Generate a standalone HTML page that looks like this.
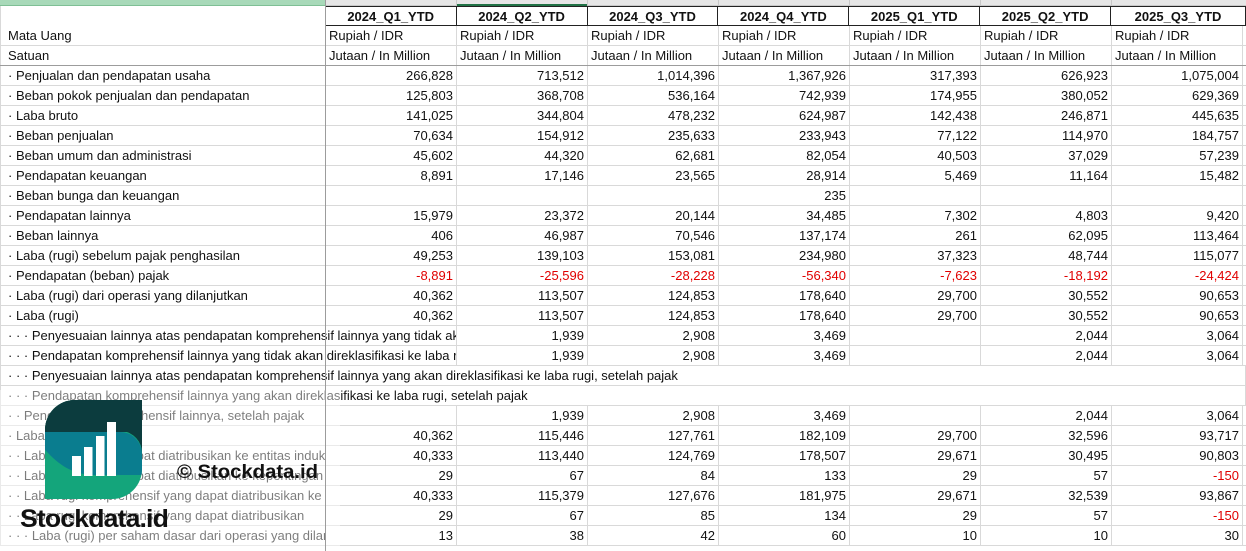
<!DOCTYPE html>
<html><head><meta charset="utf-8"><style>
*{margin:0;padding:0;box-sizing:border-box}
body{width:1246px;height:551px;overflow:hidden;background:#fff;font-family:"Liberation Sans",Arial,sans-serif;font-size:13px;color:#111;position:relative}
.top{position:absolute;top:0;left:0;width:1246px;height:6px;background:#e6e6e6;border-bottom:1px solid #c8c8c8}
.r{position:absolute;left:0;width:1246px;height:20px;display:flex;border-bottom:1px solid #d9d9d9}
.a{width:326px;padding-left:7px;border-left:1px solid #d9d9d9;border-right:1px solid #d9d9d9;white-space:nowrap;overflow:hidden;line-height:19px}
.a2{width:457px}
.n{width:131px;border-right:1px solid #d9d9d9;text-align:right;padding-right:3px;line-height:19px;white-space:nowrap;overflow:hidden}
.t{text-align:left;padding-left:3px}
.w{width:1246px;overflow:visible}
.h .n{border:1px solid #222;border-left:none;text-align:center;font-weight:bold;padding:0;line-height:20px}
.h .n:first-of-type{border-left:1px solid #222}
.h{border-bottom:none}
.neg{color:#e00000}
</style></head><body>
<div class="top"></div>
<div style="position:absolute;left:0;top:0;width:326px;height:6px;background:#a8d9b9;border-bottom:1px solid #7fbf95"></div>
<div style="position:absolute;left:456px;top:4px;width:131px;height:2px;background:#217346"></div>
<div style="position:absolute;left:456px;top:0;width:1px;height:6px;background:#c8c8c8"></div>
<div style="position:absolute;left:587px;top:0;width:1px;height:6px;background:#c8c8c8"></div>
<div style="position:absolute;left:718px;top:0;width:1px;height:6px;background:#c8c8c8"></div>
<div style="position:absolute;left:849px;top:0;width:1px;height:6px;background:#c8c8c8"></div>
<div style="position:absolute;left:980px;top:0;width:1px;height:6px;background:#c8c8c8"></div>
<div style="position:absolute;left:1111px;top:0;width:1px;height:6px;background:#c8c8c8"></div>

<div class="r h" style="top:6px"><div class="a"></div><div class="n">2024_Q1_YTD</div><div class="n">2024_Q2_YTD</div><div class="n">2024_Q3_YTD</div><div class="n">2024_Q4_YTD</div><div class="n">2025_Q1_YTD</div><div class="n">2025_Q2_YTD</div><div class="n" style="width:135px">2025_Q3_YTD</div></div>
<div class="r" style="top:26px"><div class="a">Mata Uang</div><div class="n t">Rupiah / IDR</div><div class="n t">Rupiah / IDR</div><div class="n t">Rupiah / IDR</div><div class="n t">Rupiah / IDR</div><div class="n t">Rupiah / IDR</div><div class="n t">Rupiah / IDR</div><div class="n t">Rupiah / IDR</div></div>
<div class="r" style="top:46px;border-bottom:1px solid #9c9c9c"><div class="a">Satuan</div><div class="n t">Jutaan / In Million</div><div class="n t">Jutaan / In Million</div><div class="n t">Jutaan / In Million</div><div class="n t">Jutaan / In Million</div><div class="n t">Jutaan / In Million</div><div class="n t">Jutaan / In Million</div><div class="n t">Jutaan / In Million</div></div>
<div class="r" style="top:66px"><div class="a">· Penjualan dan pendapatan usaha</div><div class="n">266,828</div><div class="n">713,512</div><div class="n">1,014,396</div><div class="n">1,367,926</div><div class="n">317,393</div><div class="n">626,923</div><div class="n">1,075,004</div></div>
<div class="r" style="top:86px"><div class="a">· Beban pokok penjualan dan pendapatan</div><div class="n">125,803</div><div class="n">368,708</div><div class="n">536,164</div><div class="n">742,939</div><div class="n">174,955</div><div class="n">380,052</div><div class="n">629,369</div></div>
<div class="r" style="top:106px"><div class="a">· Laba bruto</div><div class="n">141,025</div><div class="n">344,804</div><div class="n">478,232</div><div class="n">624,987</div><div class="n">142,438</div><div class="n">246,871</div><div class="n">445,635</div></div>
<div class="r" style="top:126px"><div class="a">· Beban penjualan</div><div class="n">70,634</div><div class="n">154,912</div><div class="n">235,633</div><div class="n">233,943</div><div class="n">77,122</div><div class="n">114,970</div><div class="n">184,757</div></div>
<div class="r" style="top:146px"><div class="a">· Beban umum dan administrasi</div><div class="n">45,602</div><div class="n">44,320</div><div class="n">62,681</div><div class="n">82,054</div><div class="n">40,503</div><div class="n">37,029</div><div class="n">57,239</div></div>
<div class="r" style="top:166px"><div class="a">· Pendapatan keuangan</div><div class="n">8,891</div><div class="n">17,146</div><div class="n">23,565</div><div class="n">28,914</div><div class="n">5,469</div><div class="n">11,164</div><div class="n">15,482</div></div>
<div class="r" style="top:186px"><div class="a">· Beban bunga dan keuangan</div><div class="n"></div><div class="n"></div><div class="n"></div><div class="n">235</div><div class="n"></div><div class="n"></div><div class="n"></div></div>
<div class="r" style="top:206px"><div class="a">· Pendapatan lainnya</div><div class="n">15,979</div><div class="n">23,372</div><div class="n">20,144</div><div class="n">34,485</div><div class="n">7,302</div><div class="n">4,803</div><div class="n">9,420</div></div>
<div class="r" style="top:226px"><div class="a">· Beban lainnya</div><div class="n">406</div><div class="n">46,987</div><div class="n">70,546</div><div class="n">137,174</div><div class="n">261</div><div class="n">62,095</div><div class="n">113,464</div></div>
<div class="r" style="top:246px"><div class="a">· Laba (rugi) sebelum pajak penghasilan</div><div class="n">49,253</div><div class="n">139,103</div><div class="n">153,081</div><div class="n">234,980</div><div class="n">37,323</div><div class="n">48,744</div><div class="n">115,077</div></div>
<div class="r" style="top:266px"><div class="a">· Pendapatan (beban) pajak</div><div class="n neg">-8,891</div><div class="n neg">-25,596</div><div class="n neg">-28,228</div><div class="n neg">-56,340</div><div class="n neg">-7,623</div><div class="n neg">-18,192</div><div class="n neg">-24,424</div></div>
<div class="r" style="top:286px"><div class="a">· Laba (rugi) dari operasi yang dilanjutkan</div><div class="n">40,362</div><div class="n">113,507</div><div class="n">124,853</div><div class="n">178,640</div><div class="n">29,700</div><div class="n">30,552</div><div class="n">90,653</div></div>
<div class="r" style="top:306px"><div class="a">· Laba (rugi)</div><div class="n">40,362</div><div class="n">113,507</div><div class="n">124,853</div><div class="n">178,640</div><div class="n">29,700</div><div class="n">30,552</div><div class="n">90,653</div></div>
<div class="r" style="top:326px"><div class="a a2">· · · Penyesuaian lainnya atas pendapatan komprehensif lainnya yang tidak akan direklasifikasi</div><div class="n">1,939</div><div class="n">2,908</div><div class="n">3,469</div><div class="n"></div><div class="n">2,044</div><div class="n">3,064</div></div>
<div class="r" style="top:346px"><div class="a a2">· · · Pendapatan komprehensif lainnya yang tidak akan direklasifikasi ke laba rugi</div><div class="n">1,939</div><div class="n">2,908</div><div class="n">3,469</div><div class="n"></div><div class="n">2,044</div><div class="n">3,064</div></div>
<div class="r" style="top:366px"><div class="a w">· · · Penyesuaian lainnya atas pendapatan komprehensif lainnya yang akan direklasifikasi ke laba rugi, setelah pajak</div></div>
<div class="r" style="top:386px"><div class="a w">· · · Pendapatan komprehensif lainnya yang akan direklasifikasi ke laba rugi, setelah pajak</div></div>
<div class="r" style="top:406px"><div class="a a2">· · Pendapatan komprehensif lainnya, setelah pajak</div><div class="n">1,939</div><div class="n">2,908</div><div class="n">3,469</div><div class="n"></div><div class="n">2,044</div><div class="n">3,064</div></div>
<div class="r" style="top:426px"><div class="a">· Laba komprehensif</div><div class="n">40,362</div><div class="n">115,446</div><div class="n">127,761</div><div class="n">182,109</div><div class="n">29,700</div><div class="n">32,596</div><div class="n">93,717</div></div>
<div class="r" style="top:446px"><div class="a">· · Laba (rugi) yang dapat diatribusikan ke entitas induk</div><div class="n">40,333</div><div class="n">113,440</div><div class="n">124,769</div><div class="n">178,507</div><div class="n">29,671</div><div class="n">30,495</div><div class="n">90,803</div></div>
<div class="r" style="top:466px"><div class="a">· · Laba (rugi) yang dapat diatribusikan ke kepentingan non-pengendali</div><div class="n">29</div><div class="n">67</div><div class="n">84</div><div class="n">133</div><div class="n">29</div><div class="n">57</div><div class="n neg">-150</div></div>
<div class="r" style="top:486px"><div class="a">· · Laba rugi komprehensif yang dapat diatribusikan ke entitas induk</div><div class="n">40,333</div><div class="n">115,379</div><div class="n">127,676</div><div class="n">181,975</div><div class="n">29,671</div><div class="n">32,539</div><div class="n">93,867</div></div>
<div class="r" style="top:506px"><div class="a">· · Laba rugi komprehensif yang dapat diatribusikan</div><div class="n">29</div><div class="n">67</div><div class="n">85</div><div class="n">134</div><div class="n">29</div><div class="n">57</div><div class="n neg">-150</div></div>
<div class="r" style="top:526px"><div class="a">· · · Laba (rugi) per saham dasar dari operasi yang dilanjutkan</div><div class="n">13</div><div class="n">38</div><div class="n">42</div><div class="n">60</div><div class="n">10</div><div class="n">10</div><div class="n">30</div></div>

<div style="position:absolute;left:0;top:390px;width:340px;height:161px;background:rgba(255,255,255,0.45)"></div>
<div style="position:absolute;left:325px;top:0;width:1px;height:551px;background:#9c9c9c"></div>

<svg style="position:absolute;left:0;top:0" width="340" height="551" viewBox="0 0 340 551">
<defs><clipPath id="c"><path d="M75,400 H142 V469 A30,30 0 0 1 112,499 H45 V430 A30,30 0 0 1 75,400 Z"/></clipPath></defs>
<g clip-path="url(#c)">
<rect x="40" y="395" width="110" height="110" fill="#14a57b"/>
<path d="M40,432 H120 A22,22 0 0 1 142,454 V475 H95 C70,475 55,462 40,444 Z" fill="#0a7d8f"/>
<rect x="40" y="395" width="110" height="37" fill="#0c3c3e"/>
<path d="M40,431 H122 A22,22 0 0 1 142,453 V395 H40Z" fill="#0c3c3e"/>
</g>
<rect x="72" y="456" width="9" height="20" fill="#fff"/>
<rect x="84" y="447" width="8.5" height="29" fill="#fff"/>
<rect x="96" y="436" width="8.5" height="40" fill="#fff"/>
<rect x="107" y="422" width="9" height="54" fill="#fff"/>
<text x="20" y="527" font-family="Liberation Sans, sans-serif" font-weight="bold" font-size="25" letter-spacing="-0.8" textLength="148" lengthAdjust="spacingAndGlyphs" fill="#111">Stockdata.id</text>
<text x="177" y="478" font-family="Liberation Sans, sans-serif" font-weight="bold" font-size="19" textLength="141" lengthAdjust="spacingAndGlyphs" fill="#111">© Stockdata.id</text>
</svg>
</body></html>
